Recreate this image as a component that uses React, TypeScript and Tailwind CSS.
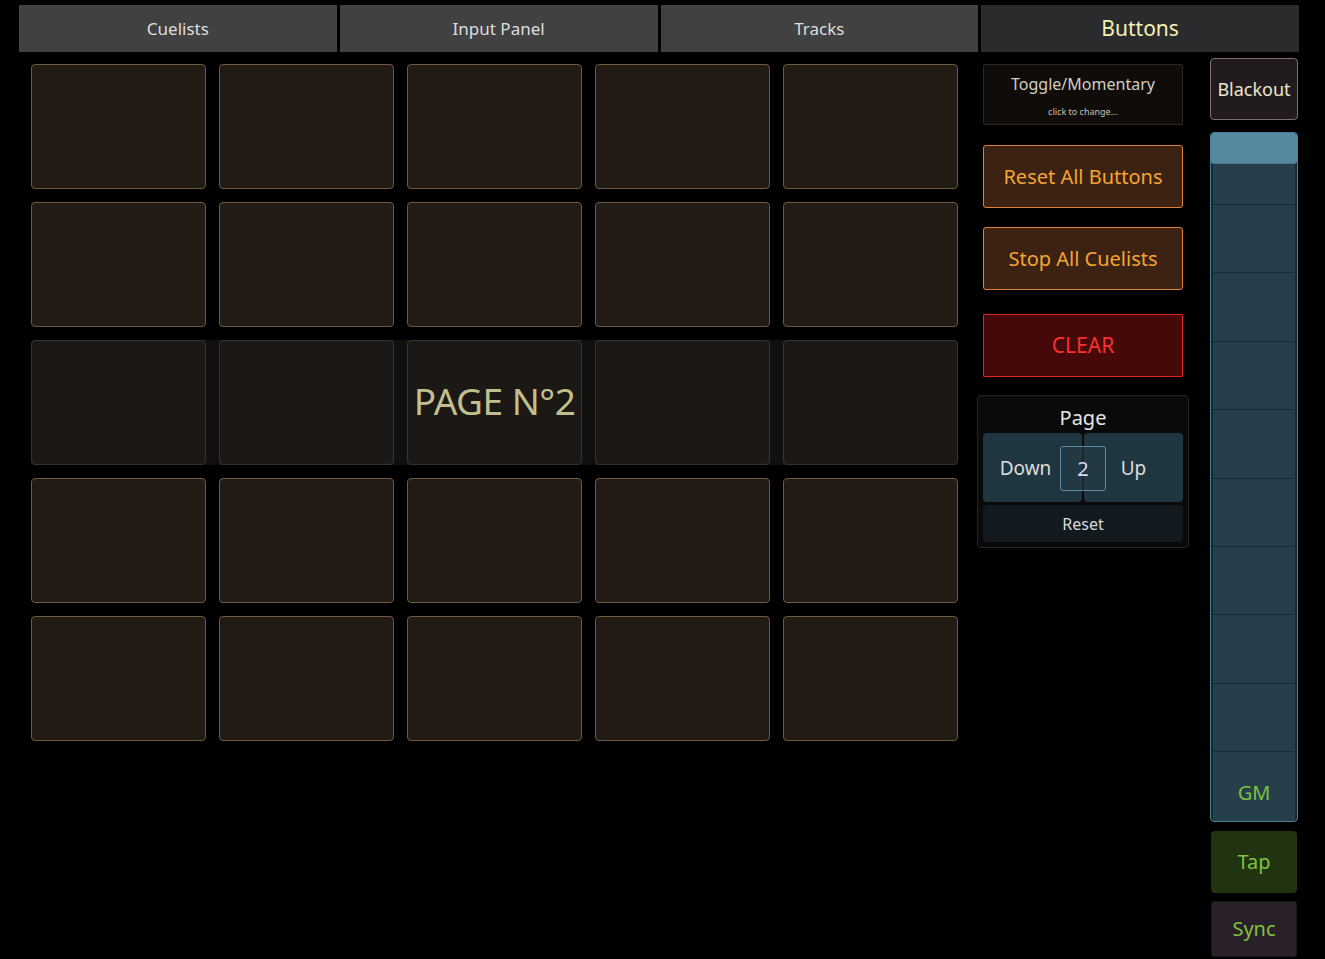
const tabs = ['Cuelists', 'Input Panel', 'Tracks', 'Buttons']

const Cell = ({ dim }: { dim?: boolean }) => (
  <div
    className={`h-[125px] rounded-[4px] border ${
      dim ? 'bg-[#1b1815] border-[#3b332b]' : 'bg-[#211a15] border-[#6e5940]'
    }`}
  />
)

const Row = ({ dim }: { dim?: boolean }) => (
  <div className="grid grid-cols-5 gap-[13px]">
    {[0, 1, 2, 3, 4].map((i) => (
      <Cell key={i} dim={dim} />
    ))}
  </div>
)

const Fader = () => (
  <div className="mt-[12px] h-[690px] rounded-[4px] border border-[#4b7d94] bg-[#1a2a31] flex flex-col overflow-hidden">
    <div className="h-[31px] shrink-0 bg-[#5589a0] rounded-[3px] border-b border-[#4a7a90]" />
    <div className="flex-1 mx-[2px] bg-[#263f4a] flex flex-col">
      <div className="h-[40px] shrink-0" />
      {[0, 1, 2, 3, 4, 5, 6, 7].map((i) => (
        <div key={i} className="h-[68.4px] shrink-0 border-t border-[#1b2c33]" />
      ))}
      <div className="flex-1 border-t border-[#1b2c33] flex items-end justify-center pb-[16px]">
        <span className="text-[20px] leading-[24px] text-[#79c141]">GM</span>
      </div>
    </div>
  </div>
)

export default function App() {
  return (
    <div
      className="w-[1325px] h-[959px] bg-black overflow-hidden pl-[19px] pt-[5px]"
      style={{ fontFamily: '"Noto Sans", "Open Sans", sans-serif' }}
    >
      <div className="w-[1280px] h-[47px] flex gap-[3px]">
        {tabs.map((t) => (
          <div
            key={t}
            className={`flex-1 flex items-center justify-center ${
              t === 'Buttons'
                ? 'bg-[#2a2b2d] text-[#f5f0b4] text-[21px]'
                : 'bg-[#414141] text-[#dedede] text-[17px]'
            }`}
          >
            {t}
          </div>
        ))}
      </div>

      <div className="flex">
        <div className="ml-[12px] mt-[12px] w-[927px] flex flex-col gap-[13px]">
          <Row />
          <Row />
          <div className="relative bg-[#101010] rounded-[4px]">
            <Row dim />
            <div className="absolute inset-0 flex items-center justify-center pointer-events-none pb-[3px]">
              <span className="text-[37px] leading-[44px] text-[#c2bf8f] tracking-[-0.5px]">PAGE N°2</span>
            </div>
          </div>
          <Row />
          <Row />
        </div>

        <div className="ml-[19px] w-[212px] flex flex-col">
          <div className="mx-[6px] mt-[12px] h-[61px] rounded-[2px] border border-[#2f261b] bg-[#0f0c09] flex flex-col items-center pt-[8px]">
            <span className="text-[16px] leading-[22px] text-[#d2cec6]">Toggle/Momentary</span>
            <span className="mt-[11px] text-[9px] leading-[12px] text-[#c8c4bc]">click to change...</span>
          </div>
          <div className="mx-[6px] mt-[20px] h-[63px] rounded-[3px] border border-[#e0803a] bg-[#3c2212] flex items-center justify-center text-[20px] text-[#f5a431]">
            Reset All Buttons
          </div>
          <div className="mx-[6px] mt-[19px] h-[63px] rounded-[3px] border border-[#e0803a] bg-[#3c2212] flex items-center justify-center text-[20px] text-[#f5a431]">
            Stop All Cuelists
          </div>
          <div className="mx-[6px] mt-[24px] h-[63px] rounded-[1px] border border-[#e02424] bg-[#450909] flex items-center justify-center text-[21px] text-[#ff2d2d]">
            CLEAR
          </div>
          <div className="mt-[18px] h-[153px] rounded-[4px] border border-[#242424] bg-[#0a0a0a] px-[5px] flex flex-col">
            <div className="h-[37px] shrink-0 flex items-center justify-center pt-[7px] text-[20px] text-[#e6e6e6]">
              Page
            </div>
            <div className="relative h-[69px] shrink-0 flex gap-[2px]">
              <div className="w-[99px] shrink-0 rounded-[4px] bg-[#1f3640] flex items-center justify-center pr-[14px] pt-[2px] text-[19px] text-[#dcdcdc]">
                Down
              </div>
              <div className="w-[99px] shrink-0 rounded-[4px] bg-[#1f3640] flex items-center justify-center pt-[2px] text-[19px] text-[#dcdcdc]">
                Up
              </div>
              <div className="absolute left-[77px] top-[13px] w-[46px] h-[45px] rounded-[3px] border border-[#5b8aa2] bg-[#243b45]/60 flex items-center justify-center text-[20px] text-[#dcd8f2]">
                2
              </div>
            </div>
            <div className="mt-[3px] h-[37px] shrink-0 rounded-[4px] bg-[#121a1f] flex items-center justify-center text-[16px] text-[#d8d8d8]">
              Reset
            </div>
          </div>
        </div>

        <div className="ml-[21px] w-[88px] mt-[6px] flex flex-col">
          <div className="h-[62px] rounded-[4px] border border-[#7e6a70] bg-[#221b1d] flex items-center justify-center text-[18px] text-[#ece6cf]">
            Blackout
          </div>
          <Fader />
          <div className="mt-[9px] mx-[1px] h-[62px] rounded-[4px] bg-[#213310] flex items-center justify-center text-[20px] text-[#7fc23f]">
            Tap
          </div>
          <div className="mt-[8px] mx-[1px] h-[56px] rounded-[3px] border border-[#1e191e] bg-[#2a2029] flex items-center justify-center text-[20px] text-[#7fc23f]">
            Sync
          </div>
        </div>
      </div>
    </div>
  )
}
